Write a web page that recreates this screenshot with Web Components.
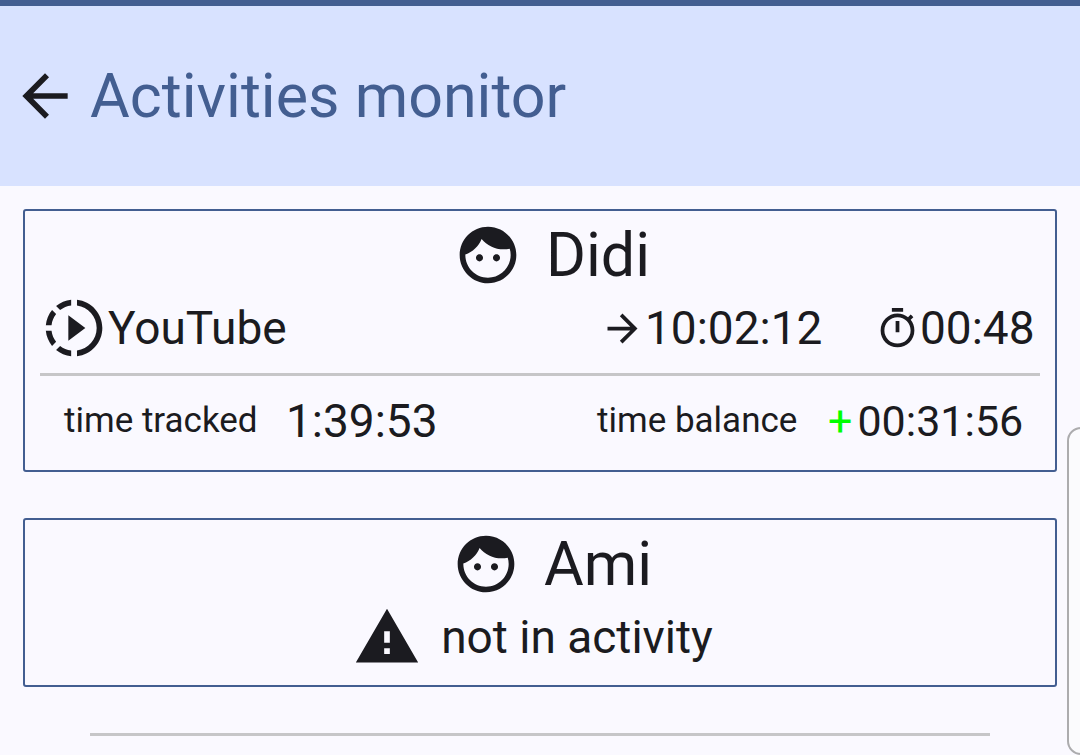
<!DOCTYPE html>
<html lang="en">
<head>
<meta charset="utf-8">
<meta name="viewport" content="width=device-width, initial-scale=1">
<title>Activities monitor</title>
<style>
    :root {
        --primary: #435e91;
        --header: #d8e2ff;
        --surface: #faf9ff;
        --text: #1b1b20;
        --divider: #c6c6c8;
        --positive: #00ff00;
        --icon-large: 68px;
        --icon-small: 45px;
        --text-title: 61px;
        --text-body: 46px;
        --text-balance: 43px;
        --text-label: 35px;
    }

    body {
        margin: 0;
        min-height: 100vh;
        overflow: hidden;
        background: var(--surface);
        color: var(--text);
        font-family: Roboto, "Liberation Sans", sans-serif;
        font-size: var(--text-body);
    }
</style>
</head>
<body>

<activities-page>
    <app-header slot="header">Activities monitor</app-header>

    <person-card>
        <span slot="name">Didi</span>
        <activity-row start="10:02:12" elapsed="00:48">YouTube</activity-row>
        <time-summary tracked="1:39:53" sign="+" balance="00:31:56"></time-summary>
    </person-card>

    <person-card>
        <span slot="name">Ami</span>
        <idle-row>not in activity</idle-row>
    </person-card>

    <side-handle slot="overlay"></side-handle>
</activities-page>

<script>
const icons = {
    back: 'M20 11H7.83l5.59-5.59L12 4l-8 8 8 8 1.41-1.41L7.83 13H20v-2z',
    forward: 'M12 4l-1.41 1.41L16.17 11H4v2h12.17l-5.58 5.59L12 20l8-8z',
    face: 'M10.25 13c0 .69-.56 1.25-1.25 1.25S7.75 13.69 7.75 13 8.31 11.75 9 11.75s1.25.56 1.25 1.25zM15 11.75c-.69 0-1.25.56-1.25 1.25s.56 1.25 1.25 1.25 1.25-.56 1.25-1.25-.56-1.25-1.25-1.25zM22 12c0 5.52-4.48 10-10 10S2 17.52 2 12 6.48 2 12 2s10 4.48 10 10zM20 12c0-.78-.12-1.53-.33-2.24-.7.15-1.42.24-2.17.24-3.13 0-5.92-1.44-7.76-3.69C8.69 8.87 6.6 10.88 4 11.86c.01.04 0 .09 0 .14 0 4.41 3.59 8 8 8s8-3.59 8-8z',
    running: 'M10 7.5v9l6-4.5zM11 4.07V2.05c-2.01.2-3.84 1-5.32 2.21L7.1 5.69c1.11-.86 2.44-1.44 3.9-1.62zM5.69 7.1L4.26 5.68C3.05 7.16 2.25 8.99 2.05 11h2.02c.18-1.46.76-2.79 1.62-3.9zM4.07 13H2.05c.2 2.01 1 3.84 2.21 5.32l1.43-1.43c-.86-1.1-1.44-2.43-1.62-3.89zm1.61 6.74C7.16 20.95 9 21.75 11 21.95v-2.02c-1.46-.18-2.79-.76-3.9-1.62l-1.42 1.43zM22 12c0 5.16-3.92 9.42-8.95 9.95v-2.02C16.97 19.41 20 16.05 20 12s-3.03-7.41-6.95-7.93V2.05C18.08 2.58 22 6.84 22 12z',
    timer: 'M15 1H9v2h6V1zm-4 13h2V8h-2v6zm8.03-6.61l1.42-1.42c-.43-.51-.9-.99-1.41-1.41l-1.42 1.42C16.07 4.74 14.12 4 12 4c-4.97 0-9 4.03-9 9s4.02 9 9 9 9-4.03 9-9c0-2.12-.74-4.07-1.97-5.61zM12 20c-3.87 0-7-3.13-7-7s3.13-7 7-7 7 3.13 7 7-3.13 7-7 7z',
    warning: 'M1 21h22L12 2 1 21zm12-3h-2v-2h2v2zm0-4h-2v-4h2v4z'
}

const createTemplate = (html) => {
    const template = document.createElement('template')
    template.innerHTML = html
    return template
}

// Every element below brings its own template
class BaseElement extends HTMLElement {
    constructor() {
        super();
        this.attachShadow({mode: 'open'})
        this.shadowRoot.appendChild(this.constructor.template.content.cloneNode(true))
    }

    setText(selector, attribute) {
        this.shadowRoot.querySelector(selector).textContent = this.getAttribute(attribute);
    }
}

class MaterialIcon extends BaseElement {
    static template = createTemplate(`
        <style>
            :host {
                display: block;
                flex: none;
                width: var(--icon-large);
                height: var(--icon-large);
            }

            :host([small]) {
                width: var(--icon-small);
                height: var(--icon-small);
            }

            svg {
                display: block;
                width: 100%;
                height: 100%;
                fill: currentColor;
            }
        </style>
        <svg viewBox="0 0 24 24" aria-hidden="true"><path></path></svg>
    `)

    connectedCallback() {
        this.shadowRoot.querySelector('path').setAttribute('d', icons[this.getAttribute('name')]);
    }
}

class AppHeader extends BaseElement {
    static template = createTemplate(`
        <style>
            :host {
                display: block;
                border-top: 6px solid var(--primary);
                background: var(--header);
            }

            header {
                display: flex;
                align-items: center;
                gap: 11px;
                padding: 56px 11px;
            }

            button {
                padding: 0;
                border: none;
                background: transparent;
                color: var(--text);
                cursor: pointer;
            }

            h1 {
                margin: 0;
                color: var(--primary);
                font-size: var(--text-title);
                font-weight: 400;
                line-height: 68px;
            }
        </style>
        <header>
            <button type="button" aria-label="Back"><material-icon name="back"></material-icon></button>
            <h1><slot></slot></h1>
        </header>
    `)
}

class PersonCard extends BaseElement {
    static template = createTemplate(`
        <style>
            :host {
                display: block;
                padding: 10px 15px 14px;
                border: 2px solid var(--primary);
                border-radius: 3px;
            }

            .person {
                display: flex;
                align-items: center;
                justify-content: center;
                gap: 24px;
                height: 68px;
                margin-bottom: 5px;
                padding-left: 24px;
            }

            h2 {
                margin: 0;
                font-size: var(--text-title);
                font-weight: 400;
                line-height: 68px;
            }
        </style>
        <section>
            <div class="person">
                <material-icon name="face"></material-icon>
                <h2><slot name="name"></slot></h2>
            </div>
            <slot></slot>
        </section>
    `)
}

class ActivityRow extends BaseElement {
    static template = createTemplate(`
        <style>
            :host {
                display: grid;
                grid-template-columns: 1fr 275px 165px;
                align-items: center;
                padding-bottom: 11px;
                border-bottom: 3px solid var(--divider);
                line-height: 68px;
            }

            div {
                display: flex;
                align-items: center;
            }
        </style>
        <div><material-icon name="running"></material-icon><slot></slot></div>
        <div><material-icon name="forward" small></material-icon><time class="start"></time></div>
        <div><material-icon name="timer" small></material-icon><time class="elapsed"></time></div>
    `)

    connectedCallback() {
        this.setText('.start', 'start');
        this.setText('.elapsed', 'elapsed');
    }
}

class TimeSummary extends BaseElement {
    static template = createTemplate(`
        <style>
            :host {
                display: block;
            }

            dl {
                display: grid;
                grid-template-columns: 222px 1fr 231px 212px;
                align-items: center;
                margin: 0;
                padding: 11px 0 1px 24px;
                line-height: 68px;
            }

            dt {
                font-size: var(--text-label);
            }

            dd {
                margin: 0;
            }

            .balance {
                display: flex;
                gap: 5px;
                font-size: var(--text-balance);
            }

            .sign {
                color: var(--positive);
            }
        </style>
        <dl>
            <dt>time tracked</dt>
            <dd class="tracked"></dd>
            <dt>time balance</dt>
            <dd class="balance"><span class="sign"></span><span class="value"></span></dd>
        </dl>
    `)

    connectedCallback() {
        this.setText('.tracked', 'tracked');
        this.setText('.sign', 'sign');
        this.setText('.value', 'balance');
    }
}

class IdleRow extends BaseElement {
    static template = createTemplate(`
        <style>
            :host {
                display: flex;
                align-items: center;
                justify-content: center;
                gap: 20px;
                padding-right: 14px;
                line-height: 68px;
            }
        </style>
        <material-icon name="warning"></material-icon>
        <slot></slot>
    `)
}

// Edge panel handle, lies over the right side of the screen
class SideHandle extends BaseElement {
    static template = createTemplate(`
        <style>
            :host {
                position: fixed;
                box-sizing: border-box;
                top: 427px;
                right: -20px;
                bottom: 0;
                width: 33px;
                border: 2px solid #acacae;
                border-radius: 14px;
                background: #fbfbfd;
            }
        </style>
    `)
}

class ActivitiesPage extends BaseElement {
    static template = createTemplate(`
        <style>
            :host {
                display: block;
            }

            main {
                display: flex;
                flex-direction: column;
                gap: 46px;
                padding: 23px;
            }

            hr {
                box-sizing: border-box;
                width: calc(100% - 134px);
                margin: 0 auto;
                border: none;
                border-top: 3px solid var(--divider);
            }
        </style>
        <slot name="header"></slot>
        <main>
            <slot></slot>
            <hr>
        </main>
        <slot name="overlay"></slot>
    `)
}

window.customElements.define('material-icon', MaterialIcon);
window.customElements.define('app-header', AppHeader);
window.customElements.define('person-card', PersonCard);
window.customElements.define('activity-row', ActivityRow);
window.customElements.define('time-summary', TimeSummary);
window.customElements.define('idle-row', IdleRow);
window.customElements.define('side-handle', SideHandle);
window.customElements.define('activities-page', ActivitiesPage);
</script>
</body>
</html>
